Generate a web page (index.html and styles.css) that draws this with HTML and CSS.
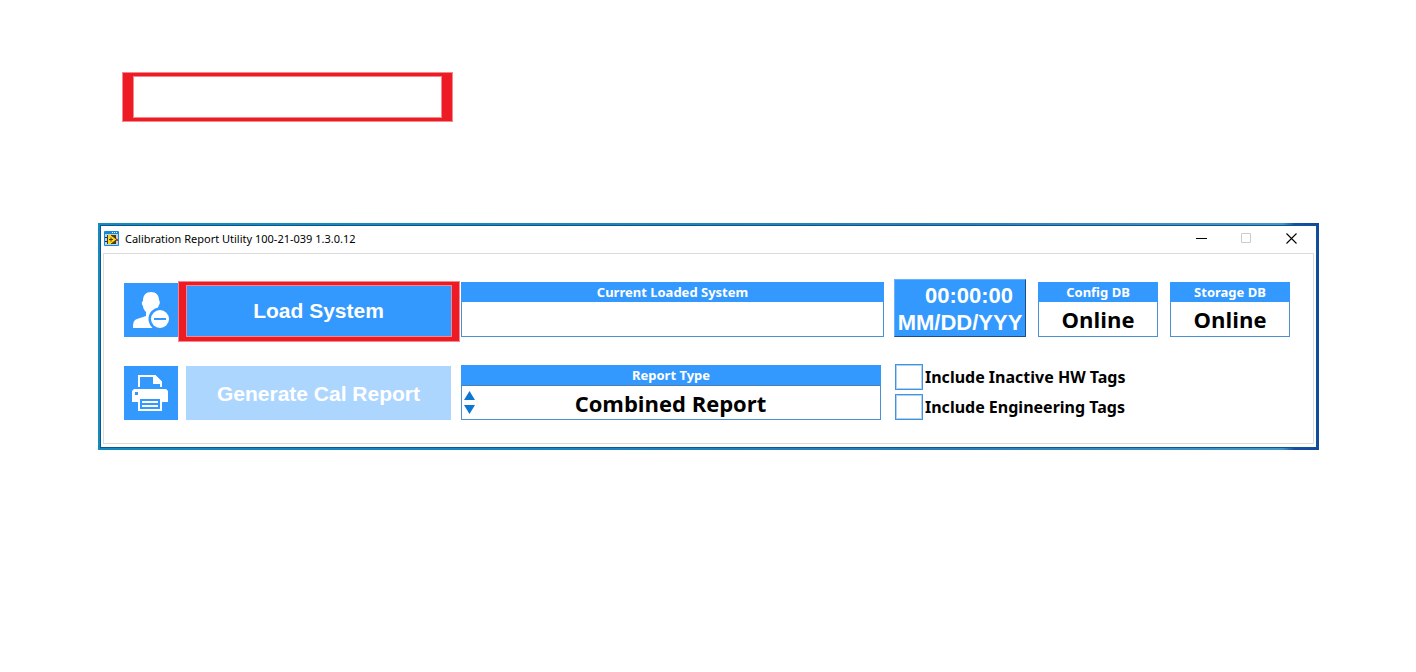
FILE: index.html
```html
<!DOCTYPE html>
<html lang="en">
<head>
<meta charset="utf-8">
<title>Calibration Report Utility</title>
<link rel="stylesheet" href="styles.css">
</head>
<body>
<main class="page">
  <div class="callout marker"></div>
  <section class="window">
    <div class="frame">
      <header class="titlebar">
        <svg class="app-icon" viewBox="0 0 15 15" aria-hidden="true">
          <rect width="15" height="15" rx="1" fill="#1687d9"/>
          <path d="M8 1h1v1H8zM10 1h1v1h-1zM12 1h1v1h-1z" fill="#fff"/>
          <path d="M1 3h13v11H1z" fill="#b9d5e8"/>
          <path d="M3 4h9v9H3z" fill="#4a3d16"/>
          <path d="M4 4h3l6 4.500L7 13H4z" fill="#ffd51c"/>
          <path d="M7 4l6 4.500L7 13" fill="none" stroke="#4a3d16"/>
          <path d="M1 6h2v1H1zM1 10h2v1H1z" fill="#102a55"/>
          <path d="M12 8h2v2h-2z" fill="#d62a20"/>
          <path d="M5 8.500h4M7 6.500v4" stroke="#4a3d16" fill="none"/>
        </svg>
        <h1 class="title">Calibration Report Utility 100-21-039 1.3.0.12</h1>
        <button class="win-btn" aria-label="Minimize"><svg viewBox="0 0 11 11"><path d="M0 5.500h11" stroke="#000"/></svg></button>
        <button class="win-btn" aria-label="Maximize" disabled><svg viewBox="0 0 11 11"><path d="M.5.500h9v9h-9z" stroke="#ccc" fill="none"/></svg></button>
        <button class="win-btn" aria-label="Close"><svg viewBox="0 0 11 11"><path d="M.5.500l10 10M10.500.500l-10 10" stroke="#000" stroke-width="1.100"/></svg></button>
      </header>
      <div class="panel">
        <div class="row">
          <div class="actions">
            <button class="icon-btn" aria-label="Log out user">
              <svg viewBox="0 0 54 54">
                <path d="M27 9c5 0 8 3 8 8 1 1 1 4 0 5-1 3-2 5-4 7v5l7 3 2 8H9c0-6 1-8 4-9l9-3v-4c-2-2-3-4-3-6-1-1-2-4 0-5 0-6 3-9 8-9z" fill="#fff"/>
                <circle cx="36" cy="36" r="11.500" fill="#3399ff"/>
                <circle cx="36" cy="36" r="9" fill="#fff"/>
                <path d="M30 36h12" stroke="#3399ff" stroke-width="2"/>
              </svg>
            </button>
            <div class="highlighted">
              <button class="big-btn">Load System</button>
              <span class="marker highlight"></span>
            </div>
          </div>
          <div class="field">
            <label class="caption" for="system">Current Loaded System</label>
            <input class="value" id="system" type="text" readonly>
          </div>
          <div class="side">
            <div class="clock"><time class="time">00:00:00</time><time>MM/DD/YYY</time></div>
            <div class="status"><label class="caption" for="config">Config DB</label><output class="value" id="config">Online</output></div>
            <div class="status"><label class="caption" for="storage">Storage DB</label><output class="value" id="storage">Online</output></div>
          </div>
        </div>
        <div class="row">
          <div class="actions">
            <button class="icon-btn" aria-label="Print">
              <svg viewBox="0 0 54 54">
                <path d="M15 21V10h16l6 6v5" fill="none" stroke="#fff" stroke-width="2"/>
                <path d="M29 9h2l7 7v2h-9z" fill="#fff"/>
                <path d="M10 23h32l2 2v11h-6v9H14v-9H8V25z" fill="#fff"/>
                <path d="M11 26h3v3h-3z" fill="#3399ff"/>
                <path d="M16 33h20v10H16z" fill="#3399ff"/>
                <path d="M18 36h16M18 40h16" stroke="#fff" stroke-width="2"/>
              </svg>
            </button>
            <button class="big-btn" disabled>Generate Cal Report</button>
          </div>
          <div class="field report">
            <label class="caption" for="report">Report Type</label>
            <div class="value stepper">
              <div class="arrows">
                <button class="arrow" aria-label="Previous"><svg viewBox="0 0 11 9"><path d="M5.500 0L11 9H0z" fill="#0a78d2"/></svg></button>
                <button class="arrow" aria-label="Next"><svg viewBox="0 0 11 9"><path d="M0 0h11L5.500 9z" fill="#0a78d2"/></svg></button>
              </div>
              <select class="choice" id="report"><option>Combined Report</option></select>
            </div>
          </div>
          <div class="side checks">
            <label class="check"><input class="box" type="checkbox">Include Inactive HW Tags</label>
            <label class="check"><input class="box" type="checkbox">Include Engineering Tags</label>
          </div>
        </div>
      </div>
    </div>
  </section>
</main>
</body>
</html>
```
FILE: styles.css
```css
* { box-sizing: border-box; }

body {
  margin: 0;
  background: #fff;
  color: #000;
  font-family: "Noto Sans", "Open Sans", sans-serif;
}

button, input, select { font: inherit; margin: 0; padding: 0; }
button { border: 0; background: none; }
svg { display: block; }

.page { padding: 72px 97px 72px 98px; }

.marker {
  border: solid #ed1c24;
  outline: 1px solid #f4888c;
  outline-offset: -1px;
  box-shadow: inset 0 0 0 1px #f4888c;
}

.callout {
  width: 331px;
  height: 50px;
  margin: 0 0 101px 24px;
  border-width: 4px 11px;
}

.window {
  padding: 3px;
  background: linear-gradient(90deg, #138bbd, #1787c0 30%, #2a7fb8 70%, #3f93c4 90%, #4398c8 97%, #1750a5 98%, #1648a0);
}

.frame {
  padding: 0 2px 3px;
  background: #fff;
  box-shadow: 0 0 0 1px #0b5590;
}

.titlebar {
  display: flex;
  align-items: center;
  height: 27px;
  padding-bottom: 3px;
}

.app-icon { width: 15px; height: 15px; margin: 0 6px 0 1px; }

.title {
  flex: 1;
  margin: 0;
  font-size: 11px;
  font-weight: 400;
}

.win-btn { display: grid; place-items: center; width: 45px; height: 24px; }
.win-btn svg { width: 11px; height: 11px; }

.panel {
  display: flex;
  flex-direction: column;
  gap: 27px;
  padding: 25px 23px 23px 20px;
  border: 1px solid #dcdcdc;
}

.row { display: flex; align-items: flex-end; gap: 10px; }
.actions { display: flex; gap: 8px; width: 327px; }

.icon-btn { width: 54px; height: 54px; background: #3399ff; }

.highlighted { position: relative; display: flex; flex: 1; }
.highlight {
  position: absolute;
  inset: -2px -9px -5px -8px;
  border-width: 4px 8px 5px;
  pointer-events: none;
}

.big-btn {
  flex: 1;
  height: 54px;
  padding-top: 2px;
  background: #3399ff;
  color: #fff;
  font: bold 21px "Liberation Sans", Arial, sans-serif;
}
.big-btn:disabled { background: #add6ff; }

.field, .status { display: flex; flex-direction: column; height: 55px; }
.field { flex: 1; }
.report { margin-right: 3px; }

.caption {
  height: 20px;
  background: #3399ff;
  color: #fff;
  font-size: 13px;
  font-weight: 700;
  line-height: 20px;
  text-align: center;
}

.value {
  flex: 1;
  min-height: 0;
  border: 1px solid #4a90d2;
  border-top: 0;
  background: #fff;
  font-family: "Open Sans", "Noto Sans", sans-serif;
  font-size: 22px;
  font-weight: 700;
  line-height: 34px;
  text-align: center;
}

.stepper { display: flex; border-top: 1px solid #4a7fb5; }
.arrows {
  display: flex;
  flex-direction: column;
  justify-content: space-evenly;
  width: 15px;
  padding-left: 2px;
}
.arrow svg { width: 11px; height: 9px; }
.choice {
  flex: 1;
  padding: 0 16px 2px 0;
  border: 0;
  appearance: none;
  background: none;
  color: #000;
  text-align: center;
  text-align-last: center;
}

.side { display: flex; align-items: flex-end; gap: 12px; width: 396px; }
.status { width: 120px; }

.clock {
  display: flex;
  flex-direction: column;
  align-items: center;
  width: 132px;
  height: 58px;
  padding-top: 2px;
  border: 1px solid;
  border-color: #68b3ff #1b4f87 #1b4f87 #68b3ff;
  background: #3399ff;
  color: #fff;
  font: bold 22px/27px "Liberation Sans", Arial, sans-serif;
}
.time { padding-left: 18px; }

.checks { flex-direction: column; align-items: flex-start; gap: 4px; }
.check {
  display: flex;
  align-items: center;
  gap: 2px;
  height: 26px;
  font-size: 16px;
  font-weight: 700;
}
.box {
  width: 28px;
  height: 26px;
  margin-left: 1px;
  border: 1px solid #4a90d2;
  appearance: none;
  background: #fff;
  box-shadow: inset 0 0 0 1px #a9d3ff;
}
```
